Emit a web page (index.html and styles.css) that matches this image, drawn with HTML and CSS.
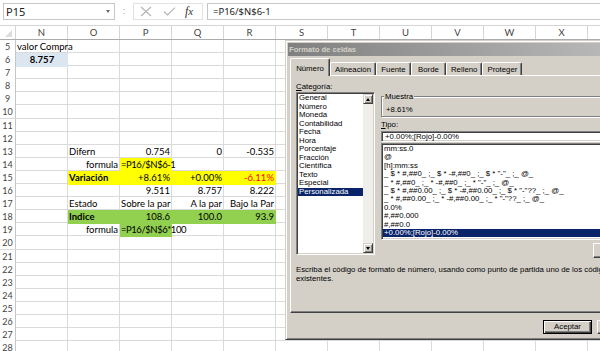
FILE: index.html
```html
<!DOCTYPE html>
<html lang="es">

<head>
    <meta charset="UTF-8">
    <meta name="viewport" content="width=device-width, initial-scale=1.0">
    <title>Formato de celdas</title>
    <link rel="stylesheet" href="styles.css">
</head>

<body>
    <!-- barra de fórmulas -->
    <div class="formula-bar">
        <div class="name-box"><span>P15</span><i class="nb-arrow"></i></div>
        <div class="fb-dots">:</div>
        <div class="fb-icons">
            <svg class="ic-x" width="12" height="11" viewBox="0 0 12 11">
                <path d="M1 1L11 10M11 1L1 10" stroke="#b4b4b4" stroke-width="1.1" fill="none" />
            </svg>
            <svg class="ic-ok" width="13" height="9" viewBox="0 0 13 9">
                <path d="M1 4.5L4.5 8L12 0.7" stroke="#b4b4b4" stroke-width="1.1" fill="none" />
            </svg>
            <span class="fx">f<span>x</span></span>
        </div>
        <div class="fb-input">=P16/$N$6-1</div>
    </div>

    <!-- hoja -->
    <div class="sheet">
        <div class="col-heads">
            <div class="corner">
                <svg width="16" height="13" viewBox="0 0 16 13">
                    <polygon points="5,11 12,11 12,4" fill="#dcdcdc" />
                </svg>
            </div>
            <div>N</div><div>O</div><div>P</div><div>Q</div><div>R</div><div>S</div>
            <div>T</div><div>U</div><div>V</div><div>W</div><div>X</div><div>Y</div>
        </div>

        <div class="row"><div class="rh">5</div><div class="cell n">valor Compra</div></div>
        <div class="row"><div class="rh">6</div><div class="cell n ctr b blue">8.757</div></div>
        <div class="row"><div class="rh">7</div></div>
        <div class="row"><div class="rh">8</div></div>
        <div class="row"><div class="rh">9</div></div>
        <div class="row"><div class="rh">10</div></div>
        <div class="row"><div class="rh">11</div></div>
        <div class="row"><div class="rh">12</div></div>
        <div class="row">
            <div class="rh">13</div>
            <div class="cell o">Difern</div>
            <div class="cell p num">0.754</div>
            <div class="cell q num">0</div>
            <div class="cell r num">-0.535</div>
        </div>
        <div class="row">
            <div class="rh">14</div>
            <div class="cell o num">formula</div>
            <div class="cell p yellow fml">=P16/$N$6-1</div>
        </div>
        <div class="row">
            <div class="rh">15</div>
            <div class="cell o b yellow">Variación</div>
            <div class="cell p num yellow">+8.61%</div>
            <div class="cell q num yellow">+0.00%</div>
            <div class="cell r num yellow red">-6.11%</div>
        </div>
        <div class="row">
            <div class="rh">16</div>
            <div class="cell p num">9.511</div>
            <div class="cell q num">8.757</div>
            <div class="cell r num">8.222</div>
        </div>
        <div class="row">
            <div class="rh">17</div>
            <div class="cell o">Estado</div>
            <div class="cell p num">Sobre la par</div>
            <div class="cell q num">A la par</div>
            <div class="cell r num">Bajo la Par</div>
        </div>
        <div class="row">
            <div class="rh">18</div>
            <div class="cell o b green">Indice</div>
            <div class="cell p num green">108.6</div>
            <div class="cell q num green">100.0</div>
            <div class="cell r num green">93.9</div>
        </div>
        <div class="row">
            <div class="rh">19</div>
            <div class="cell o num">formula</div>
            <div class="cell p green fml">=P16/$N$6*100</div>
        </div>
        <div class="row"><div class="rh">20</div></div>
        <div class="row"><div class="rh">21</div></div>
        <div class="row"><div class="rh">22</div></div>
        <div class="row"><div class="rh">23</div></div>
        <div class="row"><div class="rh">24</div></div>
        <div class="row"><div class="rh">25</div></div>
        <div class="row"><div class="rh">26</div></div>
        <div class="row"><div class="rh">27</div></div>
        <div class="row"><div class="rh">28</div></div>
    </div>

    <!-- cuadro de diálogo -->
    <div class="dialog">
        <div class="title">Formato de celdas</div>
        <div class="tabs">
            <div class="tab active">Número</div>
            <div class="tab">Alineación</div>
            <div class="tab">Fuente</div>
            <div class="tab">Borde</div>
            <div class="tab">Relleno</div>
            <div class="tab">Proteger</div>
        </div>
        <div class="panel">
            <div class="panel-main">
                <div class="cat-col">
                    <div class="label"><u>C</u>ategoría:</div>
                    <div class="listbox">
                        <ul class="items">
                            <li>General</li>
                            <li>Número</li>
                            <li>Moneda</li>
                            <li>Contabilidad</li>
                            <li>Fecha</li>
                            <li>Hora</li>
                            <li>Porcentaje</li>
                            <li>Fracción</li>
                            <li>Científica</li>
                            <li>Texto</li>
                            <li>Especial</li>
                            <li class="sel">Personalizada</li>
                        </ul>
                        <div class="vscroll">
                            <div class="sb-btn up"></div>
                            <div class="sb-track"></div>
                            <div class="sb-btn down"></div>
                        </div>
                    </div>
                </div>
                <div class="type-col">
                    <div class="sample">
                        <div class="sample-title">Muestra</div>
                        <div class="sample-value">+8.61%</div>
                    </div>
                    <div class="label tipo"><u>T</u>ipo:</div>
                    <div class="type-input">+0.00%;[Rojo]-0.00%</div>
                    <ul class="type-list">
                        <li>mm:ss.0</li>
                        <li>@</li>
                        <li>[h]:mm:ss</li>
                        <li>_ $ * #,##0_ ;_ $ * -#,##0_ ;_ $ * "-"_ ;_ @_</li>
                        <li>_ * #,##0_ ;_ * -#,##0_ ;_ * "-"_ ;_ @_</li>
                        <li>_ $ * #,##0.00_ ;_ $ * -#,##0.00_ ;_ $ * "-"??_ ;_ @_</li>
                        <li>_ * #,##0.00_ ;_ * -#,##0.00_ ;_ * "-"??_ ;_ @_</li>
                        <li>0.0%</li>
                        <li>#,##0.000</li>
                        <li>#,##0.0</li>
                        <li class="sel">+0.00%;[Rojo]-0.00%</li>
                    </ul>
                    <div class="btn del">Eliminar</div>
                </div>
            </div>
            <p class="desc">Escriba el código de formato de número, usando como punto de partida uno de los códigos<br>existentes.</p>
        </div>
        <div class="buttons">
            <div class="btn default">Aceptar</div>
            <div class="btn">Cancelar</div>
        </div>
    </div>
</body>

</html>
```

FILE: styles.css
```css
html,
body {
    margin: 0;
    overflow: hidden;
}

body {
    width: 600px;
    height: 351px;
    position: relative;
    background: #fff;
    font-family: Lato, "Liberation Sans", sans-serif;
}

ul {
    margin: 0;
    padding: 0;
    list-style: none;
}

/* barra de fórmulas */
.formula-bar {
    display: flex;
    height: 17px;
    padding: 3px 0 0 3px;
    font-family: "Noto Sans", sans-serif;
    font-size: 9.5px;
    color: #222;
}

.name-box {
    width: 112px;
    box-sizing: border-box;
    border: 1px solid #c6c6c6;
    display: flex;
    align-items: center;
    justify-content: space-between;
    padding: 0 4px 0 2px;
    font-size: 11px;
}

.nb-arrow {
    width: 0;
    height: 0;
    border-left: 2.5px solid transparent;
    border-right: 2.5px solid transparent;
    border-top: 3px solid #666;
}

.fb-dots {
    width: 18px;
    text-align: center;
    color: #aaa;
    line-height: 15px;
}

.fb-icons {
    width: 70px;
    box-sizing: border-box;
    border: 1px solid #e2e2e2;
    display: flex;
    align-items: center;
    padding-left: 6px;
}

.ic-ok {
    margin-left: 11px;
}

.fx {
    margin-left: 9px;
    font-family: "Liberation Serif", serif;
    font-style: italic;
    font-size: 12px;
    color: #333;
    line-height: 15px;
}

.fx span {
    font-size: 11px;
}

.fb-input {
    flex: 1;
    margin-left: 4px;
    border: 1px solid #c6c6c6;
    border-right: none;
    padding-left: 5px;
    line-height: 15px;
}

/* hoja */
.sheet {
    margin-top: 5px;
}

.col-heads,
.row {
    display: grid;
    grid-template-columns: 16px repeat(12, 52px);
}

.col-heads {
    height: 15px;
    box-sizing: border-box;
    border-top: 1px solid #d5d5d5;
    border-bottom: 1px solid #ababab;
    font-size: 9.5px;
    color: #444;
    line-height: 13px;
    text-align: center;
}

.col-heads>div {
    border-right: 1px solid #d5d5d5;
}

.corner {
    line-height: 0;
}

.row {
    height: 13.1px;
    box-sizing: border-box;
    border-bottom: 1px solid #dadada;
    background: linear-gradient(to right, transparent 51px, #dadada 51px) 16px 0 / 52px 100%;
    font-size: 9.5px;
    color: #000;
}

.rh {
    grid-column: 1;
    background: #fff;
    border-right: 1px solid #c6c6c6;
    text-align: center;
    color: #444;
    font-size: 9px;
    line-height: 13px;
}

.cell {
    grid-row: 1;
    padding: 0 2px 0 1px;
    line-height: 13px;
    white-space: nowrap;
}

.n { grid-column: 2; }
.o { grid-column: 3; }
.p { grid-column: 4; }
.q { grid-column: 5; }
.r { grid-column: 6; }

.cell.num {
    text-align: right;
}

.cell.ctr {
    display: flex;
    justify-content: center;
    padding: 0;
}

.b {
    font-weight: 700;
}

.red {
    color: #f00;
}

/* las fórmulas en Lato salen más anchas que en Calibri */
.fml {
    letter-spacing: -0.45px;
}

/* celdas con relleno tapan la cuadrícula */
.yellow,
.green,
.blue {
    margin-bottom: -1px;
}

.yellow {
    background: #ff0;
}

.green {
    background: #92d050;
}

.blue {
    background: #dce6f1;
}

/* cuadro de diálogo */
.dialog {
    position: absolute;
    left: 285px;
    top: 40px;
    width: 370px;
    height: 300px;
    box-sizing: border-box;
    padding: 2px;
    background: #d4d0c8;
    border: 1px solid;
    border-color: #d4d0c8 #404040 #404040 #d4d0c8;
    box-shadow: inset 1px 1px #fff, inset -1px -1px #808080;
    display: flex;
    flex-direction: column;
    font-family: "Liberation Sans", Arial, sans-serif;
    font-size: 7.8px;
    color: #000;
}

.title {
    height: 13px;
    line-height: 13px;
    padding-left: 1px;
    background: linear-gradient(to right, #808080, #c0c0c0);
    color: #d4d0c8;
    font-weight: 700;
    font-size: 7.6px;
}

.tabs {
    display: flex;
    align-items: flex-end;
    height: 18px;
    margin: 1px 2px 0;
}

.tab {
    min-width: 35px;
    height: 13px;
    box-sizing: border-box;
    padding: 1px 4px 0;
    text-align: center;
    line-height: 11px;
    border: 1px solid;
    border-color: #fff #404040 transparent #fff;
    border-bottom: none;
    border-radius: 2px 2px 0 0;
    box-shadow: inset -1px 0 #808080;
}

.tab.active {
    position: relative;
    z-index: 1;
    min-width: 40px;
    height: 18px;
    margin-bottom: -1px;
    padding-top: 4px;
    background: #d4d0c8;
}

.panel {
    height: 238px;
    box-sizing: border-box;
    margin: 0 2px;
    padding: 6px 5px 0;
    border: 1px solid;
    border-color: #fff #404040 #404040 #fff;
    box-shadow: inset -1px -1px #808080;
    display: flex;
    flex-direction: column;
}

.panel-main {
    display: flex;
    gap: 6px;
}

.label {
    line-height: 9px;
    height: 9px;
}

.cat-col {
    width: 79px;
}

.listbox {
    margin-top: 1px;
    height: 163px;
    box-sizing: border-box;
    display: flex;
    background: #fff;
    border: 1px solid;
    border-color: #808080 #fff #fff #808080;
    box-shadow: inset 1px 1px #404040, inset -1px -1px #d4d0c8;
    padding: 1px;
}

.items {
    flex: 1;
    line-height: 8.5px;
}

.items li,
.type-list li {
    padding-left: 1px;
    white-space: pre;
}

.sel {
    background: #0a246a;
    color: #fff;
}

.vscroll {
    width: 10px;
    display: flex;
    flex-direction: column;
}

.sb-track {
    flex: 1;
    background: #efeeea;
}

.sb-btn {
    height: 10px;
    box-sizing: border-box;
    background: #d4d0c8;
    border: 1px solid;
    border-color: #d4d0c8 #404040 #404040 #d4d0c8;
    box-shadow: inset 1px 1px #fff, inset -1px -1px #808080;
    display: flex;
    align-items: center;
    justify-content: center;
}

.sb-btn::before {
    content: '';
    border-left: 2.5px solid transparent;
    border-right: 2.5px solid transparent;
}

.sb-btn.up::before {
    border-bottom: 3px solid #000;
}

.sb-btn.down::before {
    border-top: 3px solid #000;
}

.type-col {
    flex: 1;
    padding-top: 10px;
    display: flex;
    flex-direction: column;
}

.sample {
    margin-top: 4px;
    height: 21px;
    box-sizing: border-box;
    border: 1px solid #808080;
    box-shadow: inset 1px 1px #fff, 1px 1px #fff;
    padding-left: 4px;
}

.sample-title {
    width: fit-content;
    margin: -5px 0 0 -2px;
    padding: 0 1px;
    line-height: 9px;
    background: #d4d0c8;
}

.sample-value {
    margin-top: 4px;
    line-height: 9px;
}

.tipo {
    margin-top: 3px;
}

.type-input {
    margin-top: 2px;
    height: 11px;
    box-sizing: border-box;
    background: #fff;
    border: 1px solid;
    border-color: #808080 #fff #fff #808080;
    box-shadow: inset 1px 1px #404040, inset -1px -1px #d4d0c8;
    padding-left: 3px;
    line-height: 9px;
}

.type-list {
    margin-top: 1px;
    height: 96.5px;
    box-sizing: border-box;
    overflow: hidden;
    background: #fff;
    border: 1px solid;
    border-color: #808080 #fff #fff #808080;
    box-shadow: inset 1px 1px #404040, inset -1px -1px #d4d0c8;
    padding: 1px;
    line-height: 8.4px;
}

.btn {
    width: 49px;
    height: 14px;
    box-sizing: border-box;
    text-align: center;
    line-height: 12px;
    background: #d4d0c8;
    border: 1px solid;
    border-color: #fff #404040 #404040 #fff;
    box-shadow: inset -1px -1px #808080;
}

.btn.default {
    border-color: #000;
    box-shadow: inset 1px 1px #fff, inset -1px -1px #404040, inset -2px -2px #808080;
}

.btn.del {
    align-self: flex-end;
    width: 51px;
    height: 15px;
    margin-top: 3px;
}

.desc {
    margin: 7px 0 0;
    line-height: 9px;
    white-space: nowrap;
}

.buttons {
    display: flex;
    justify-content: flex-end;
    gap: 5px;
    margin-top: 7px;
    padding-right: 6px;
}
```
